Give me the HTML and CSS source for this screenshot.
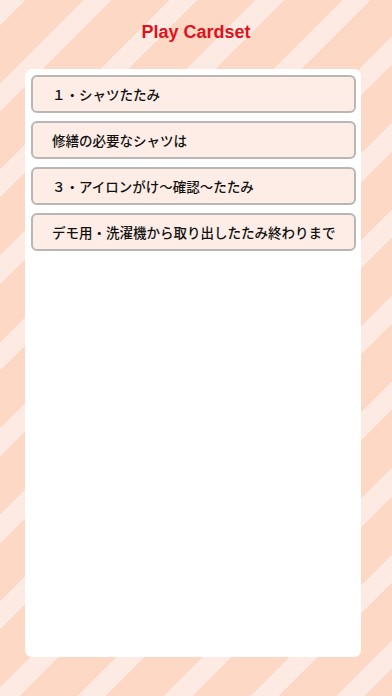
FILE: index.html
```html
<!DOCTYPE html>
<html lang="ja">
<head>
<meta charset="utf-8">
<title>Play Cardset</title>
<link rel="stylesheet" href="styles.css">
</head>
<body>
<div class="page">
  <header class="header">
    <h1 class="title">Play Cardset</h1>
  </header>
  <main class="card">
    <ul class="list">
      <li class="item">１・シャツたたみ</li>
      <li class="item">修繕の必要なシャツは</li>
      <li class="item">３・アイロンがけ〜確認〜たたみ</li>
      <li class="item">デモ用・洗濯機から取り出したたみ終わりまで</li>
    </ul>
  </main>
</div>
</body>
</html>
```
FILE: styles.css
```css
html, body {
  margin: 0;
  padding: 0;
  height: 100%;
}
body {
  font-family: "Noto Sans CJK JP", "Noto Sans", sans-serif;
  background-color: #fdd8c5;
  background-image: repeating-linear-gradient(135deg, #fdebe3 -2px 18px, #fdd8c5 18px 59px);
}
.page {
  width: 392px;
  height: 696px;
  display: flex;
  flex-direction: column;
}
.header {
  height: 69px;
  display: flex;
  justify-content: center;
  align-items: flex-start;
}
.title {
  margin: 21px 0 0;
  font-family: "Liberation Sans", "Noto Sans", sans-serif;
  font-size: 18px;
  font-weight: 700;
  color: #e0111b;
  line-height: 22px;
}
.card {
  margin-left: 25px;
  width: 336px;
  height: 588px;
  background: #ffffff;
  border-radius: 7px;
  box-sizing: border-box;
  padding: 6px 5px 6px 6px;
}
.list {
  list-style: none;
  margin: 0;
  padding: 0;
  display: flex;
  flex-direction: column;
  gap: 8px;
}
.item {
  height: 38px;
  box-sizing: border-box;
  border: 2.5px solid #b9b6b4;
  border-radius: 6px;
  background: #fdede6;
  display: flex;
  align-items: center;
  padding-left: 19px;
  font-size: 13.5px;
  font-weight: 500;
  color: #111;
  white-space: nowrap;
}
```
